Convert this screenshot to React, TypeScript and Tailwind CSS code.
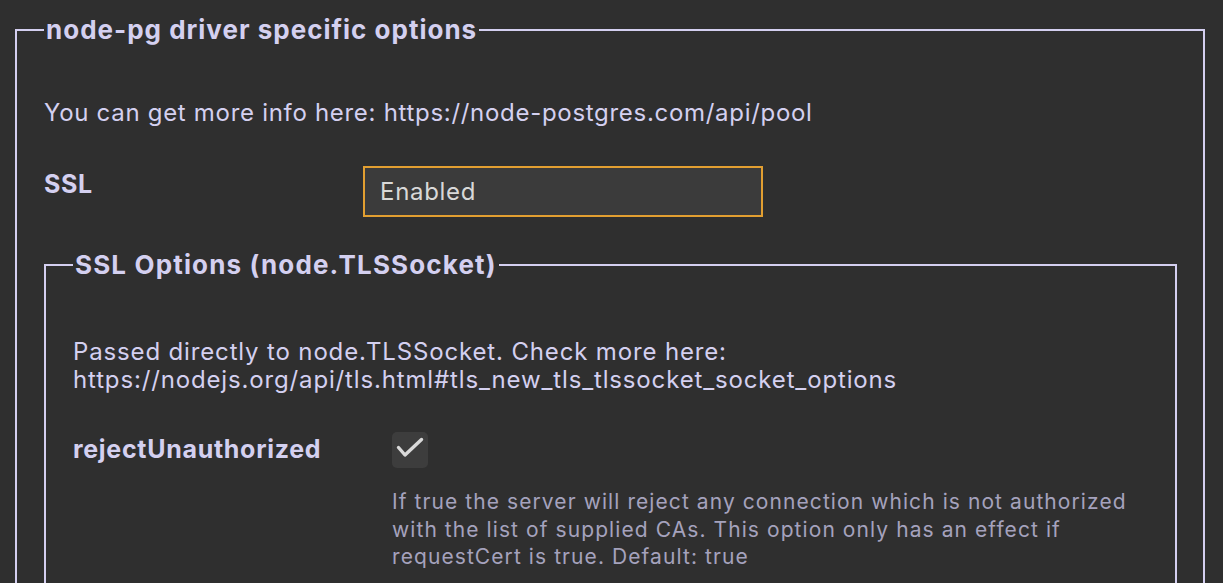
import React from 'react'

const Check = () => (
  <svg viewBox="0 0 36 36" className="w-[36px] h-[36px]" fill="none" stroke="#d9d9d9" strokeWidth="3.4" strokeLinecap="round" strokeLinejoin="round">
    <path d="M6.5 15.5l6.5 7.5L29.5 7.5" />
  </svg>
)

const App: React.FunctionComponent = () => {
  return (
    <main className="h-[583px] w-full overflow-hidden bg-[#2f2f2f] pt-[14px] pl-[15px] pr-[18px] font-['Inter','Noto_Sans',sans-serif] text-[#d4d0f0]">
      <fieldset className="border-2 border-[#d4cff0] pl-[27px] pr-[26px] pb-8">
        <legend className="text-[26px] font-bold leading-[32px] tracking-[1px] px-[2px]">node-pg driver specific options</legend>
        <p className="mt-[53px] text-[24px] leading-[28px] tracking-[0.7px]">You can get more info here: https://node-postgres.com/api/pool</p>

        <div className="mt-[39px] grid grid-cols-[319px_1fr] items-start">
          <div className="text-[25px] font-bold leading-[28px] tracking-[0.6px] pt-[4px]">SSL</div>
          <div className="w-[400px] h-[51px] border-2 border-[#e29f31] bg-[#3b3b3b] flex items-center pl-[15px] text-[24px] tracking-[0.7px] text-[#d8d8d8]">
            Enabled
          </div>
        </div>

        <fieldset className="mt-[32px] border-2 border-[#d4cff0] pl-[27px] pr-[26px] pb-8">
          <legend className="text-[26px] font-bold leading-[32px] tracking-[1.15px] px-[2px]">SSL Options (node.TLSSocket)</legend>
          <p className="mt-[57px] text-[24px] leading-[28px] tracking-[0.85px]">
            Passed directly to node.TLSSocket. Check more here:
            <br />
            https://nodejs.org/api/tls.html#tls_new_tls_tlssocket_socket_options
          </p>

          <div className="mt-[38px] grid grid-cols-[319px_1fr] items-start">
            <div className="text-[25px] font-bold leading-[28px] tracking-[0.7px] pt-[3px]">rejectUnauthorized</div>
            <div>
              <div className="w-[36px] h-[36px] rounded-[5px] bg-[#3d3d3d] flex items-center justify-center">
                <Check />
              </div>
              <p className="mt-[20px] text-[21px] leading-[27.5px] tracking-[1.08px] text-[#a5a2bd]">
                If true the server will reject any connection which is not authorized
                <br />
                with the list of supplied CAs. This option only has an effect if
                <br />
                requestCert is true. Default: true
              </p>
            </div>
          </div>
        </fieldset>
      </fieldset>
    </main>
  )
}

export default App
